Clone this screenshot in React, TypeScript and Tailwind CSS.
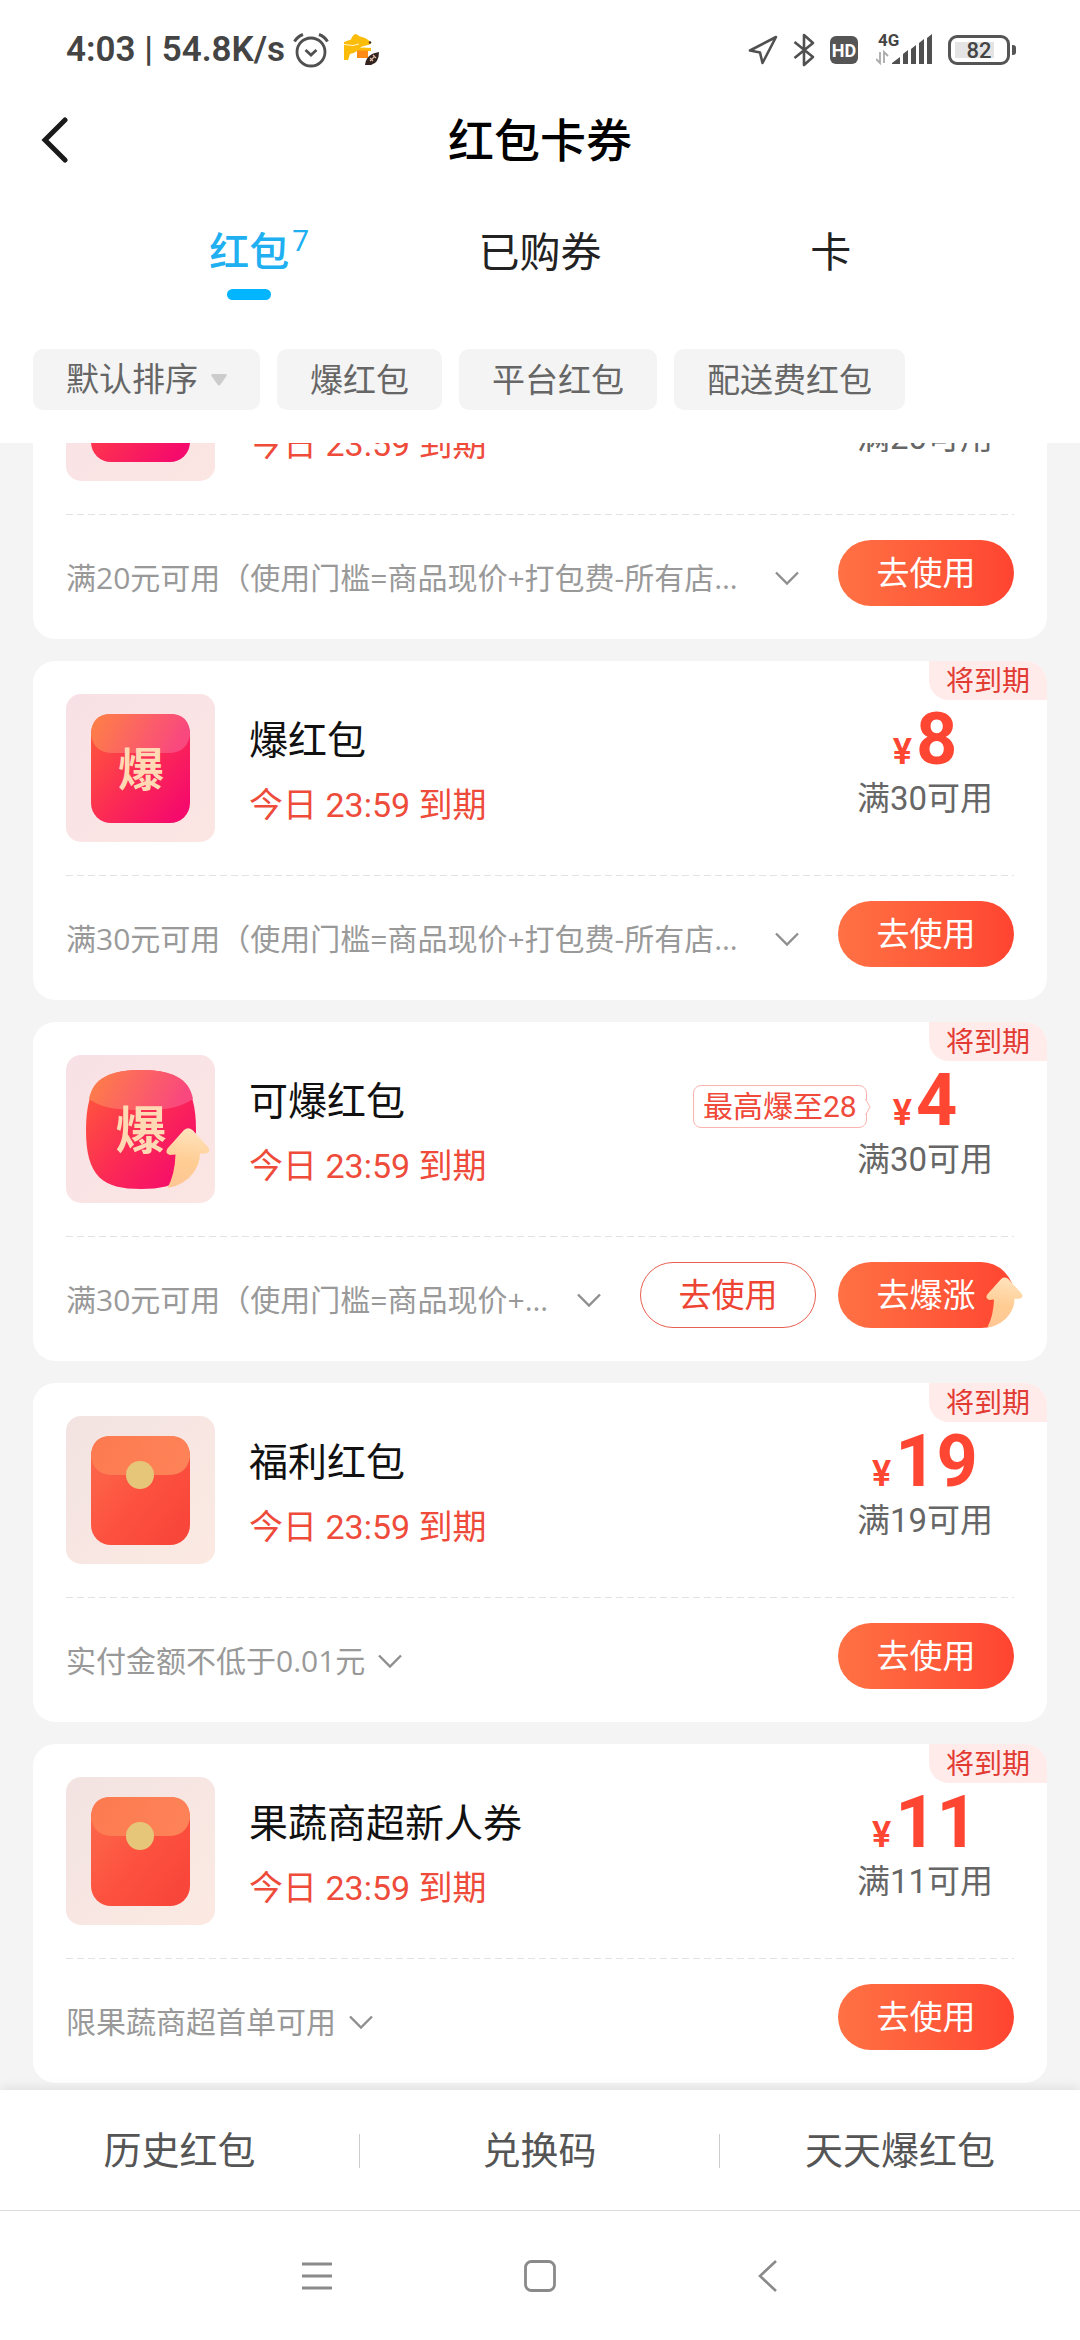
import { useId, useLayoutEffect, useRef } from "react";

type IconKind = "burst" | "boost" | "envelope";

type Coupon = {
  id: number;
  icon: IconKind;
  title?: string;
  expires: string;
  amount?: string;
  threshold: string;
  note: string;
  expiring?: boolean;
  boostTo?: string;
};

const coupons: Coupon[] = [
  {
    id: 1,
    icon: "burst",
    expires: "今日 23:59 到期",
    threshold: "满20可用",
    note: "满20元可用（使用门槛=商品现价+打包费-所有店铺优惠）",
  },
  {
    id: 2,
    icon: "burst",
    title: "爆红包",
    expires: "今日 23:59 到期",
    amount: "8",
    threshold: "满30可用",
    note: "满30元可用（使用门槛=商品现价+打包费-所有店铺优惠）",
    expiring: true,
  },
  {
    id: 3,
    icon: "boost",
    title: "可爆红包",
    expires: "今日 23:59 到期",
    amount: "4",
    threshold: "满30可用",
    note: "满30元可用（使用门槛=商品现价+打包费-所有店铺优惠）",
    expiring: true,
    boostTo: "最高爆至28",
  },
  {
    id: 4,
    icon: "envelope",
    title: "福利红包",
    expires: "今日 23:59 到期",
    amount: "19",
    threshold: "满19可用",
    note: "实付金额不低于0.01元",
    expiring: true,
  },
  {
    id: 5,
    icon: "envelope",
    title: "果蔬商超新人券",
    expires: "今日 23:59 到期",
    amount: "11",
    threshold: "满11可用",
    note: "限果蔬商超首单可用",
    expiring: true,
  },
];

const ARROW =
  "M18 2Q22-1.500 26.500 2L42.500 19.500Q45 24.500 39.500 25.500H34Q34 35 28 44Q19 57 1.500 60Q9 46 9.500 26.500L4 27Q-1.500 25.500 1.500 20.500Z";

function ArrowGradient({ id }: { id: string }) {
  return (
    <linearGradient id={id} x1="0.5" y1="0" x2="0.4" y2="1">
      <stop offset="0" stopColor="#ffe3bd" />
      <stop offset="0.55" stopColor="#ffcd94" />
      <stop offset="1" stopColor="#ffc694" />
    </linearGradient>
  );
}

function CouponIcon({ kind }: { kind: IconKind }) {
  const id = useId();
  const envelope = kind === "envelope";
  return (
    <svg viewBox="0 0 149 148" className="h-[148px] w-[149px] shrink-0" aria-hidden="true">
      <defs>
        <linearGradient id={`${id}bg`} x1="0" y1="0" x2="1" y2="1">
          <stop offset="0" stopColor={envelope ? "#f2e3e2" : "#f8e1e6"} />
          <stop offset="1" stopColor={envelope ? "#fce9e2" : "#fbe6e3"} />
        </linearGradient>
        <linearGradient id={`${id}body`} x1="0" y1="0.1" x2="0.9" y2="0.9">
          <stop offset="0" stopColor={envelope ? "#fb6a4c" : "#ff5a3a"} />
          <stop offset="0.55" stopColor={envelope ? "#fd513f" : "#fb2a55"} />
          <stop offset="1" stopColor={envelope ? "#f8463a" : "#f50b6b"} />
        </linearGradient>
        <linearGradient id={`${id}flap`} x1="0" y1="0" x2="1" y2="0.2">
          <stop offset="0" stopColor={envelope ? "#fd7a50" : "#fe8244"} />
          <stop offset="1" stopColor={envelope ? "#fe8257" : "#f9487e"} />
        </linearGradient>
        <ArrowGradient id={`${id}arrow`} />
      </defs>
      <rect width="149" height="148" rx="15" fill={`url(#${id}bg)`} />
      {kind === "boost" ? (
        <>
          <path
            d="M75 15C113 15 130 27 130 75C130 122 113 134 75 134C37 134 20 122 20 75C20 27 37 15 75 15Z"
            fill={`url(#${id}body)`}
          />
          <path
            d="M75 15C106 15 123 23 127 44C114 53 98 55 75 55C52 55 35 53 23 44C27 23 44 15 75 15Z"
            fill={`url(#${id}flap)`}
          />
        </>
      ) : (
        <>
          <rect x="25" y="20" width="99" height="109" rx="20" fill={`url(#${id}body)`} />
          <path
            d="M45 20H104Q124 20 124 41Q121 59 102 59H47Q28 59 25 41Q25 20 45 20Z"
            fill={`url(#${id}flap)`}
          />
        </>
      )}
      {envelope ? (
        <circle cx="74" cy="59" r="14" fill="#e6c678" />
      ) : (
        <text
          x={75}
          y={kind === "boost" ? 94 : 92}
          textAnchor="middle"
          fontFamily="'Noto Sans CJK SC', sans-serif"
          fontWeight="700"
          fontSize={kind === "boost" ? 51 : 46}
          fill="#ffd9b3"
        >
          爆
        </text>
      )}
      {kind === "boost" && (
        <g transform="translate(100 73)">
          <path d={ARROW} fill={`url(#${id}arrow)`} />
        </g>
      )}
    </svg>
  );
}

function BoostArrow() {
  const id = useId();
  return (
    <svg
      viewBox="0 0 44 60"
      className="absolute -right-[9px] bottom-0 h-[51px] w-[37px]"
      aria-hidden="true"
    >
      <defs>
        <ArrowGradient id={id} />
      </defs>
      <path d={ARROW} fill={`url(#${id})`} />
    </svg>
  );
}

function CouponCard({ coupon }: { coupon: Coupon }) {
  return (
    <article className="relative rounded-[22px] bg-white px-[33px] pt-[33px] pb-[33px]">
      {coupon.expiring && (
        <span className="absolute top-0 right-0 h-[39px] rounded-tr-[22px] rounded-bl-[20px] bg-[#ffebea] px-[17px] text-[28px] leading-[42px] text-[#e23b33]">
          将到期
        </span>
      )}
      <div className="flex">
        <CouponIcon kind={coupon.icon} />
        <div className="min-w-0 flex-1 pt-[21px] pl-[34px]">
          <h2 className="h-[52px] text-[39px] leading-[52px] text-[#111]">{coupon.title}</h2>
          <p className="mt-[16px] text-[34px] leading-[44px] text-[#ee4b3a]">{coupon.expires}</p>
        </div>
        <div className="flex w-[178px] flex-col items-center pt-[14px]">
          <div className="relative flex h-[64px] items-baseline gap-[4px] font-bold text-[#ff4632]">
            {coupon.amount && (
              <>
                <span className="text-[36px] leading-[64px] font-semibold">¥</span>
                <span className="text-[72px] leading-[64px]">{coupon.amount}</span>
              </>
            )}
            {coupon.boostTo && (
              <span className="absolute top-[16px] right-full mr-[26px] rounded-[8px] border border-[#fbb5ae] px-[9px] text-[30px] leading-[41px] font-normal whitespace-nowrap text-[#f04a3a]">
                {coupon.boostTo}
                <svg viewBox="0 0 6 16" className="absolute top-[13px] -right-[5px] h-4 w-[6px]" aria-hidden="true">
                  <path d="M0 0H.5L5 8L.5 16H0Z" fill="#fff" />
                  <path d="M.5 0L5 8L.5 16" fill="none" stroke="#fbb5ae" />
                </svg>
              </span>
            )}
          </div>
          <p className="mt-[5px] text-[33px] leading-[44px] text-[#666]">{coupon.threshold}</p>
        </div>
      </div>
      <div className="mt-[33px] h-px bg-[repeating-linear-gradient(90deg,#e2e2e2_0_7px,transparent_7px_11px)]" />
      <div className="mt-[25px] flex items-center gap-[22px]">
        <div className="flex min-w-0 flex-1 items-center pt-[10px] pr-[16px]">
          <p className="truncate font-['Open_Sans','Noto_Sans_CJK_SC',sans-serif] text-[30px] leading-[40px] text-[#999]">
            {coupon.note}
          </p>
          <button type="button" aria-label="展开使用规则" className="ml-[12px] shrink-0">
            <svg viewBox="0 0 26 16" className="h-4 w-[26px]" aria-hidden="true">
              <path d="M2 2.5L13 13.5L24 2.5" fill="none" stroke="#8f8f8f" strokeWidth="2.4" />
            </svg>
          </button>
        </div>
        {coupon.boostTo && (
          <button
            type="button"
            className="h-[66px] w-[176px] shrink-0 rounded-full border border-[#e8604f] text-[33px] leading-[66px] text-[#ee4433]"
          >
            去使用
          </button>
        )}
        <button
          type="button"
          className="relative h-[66px] w-[176px] shrink-0 rounded-full bg-linear-to-r from-[#ff7144] to-[#ff4431] text-[33px] leading-[68px] text-white"
        >
          {coupon.boostTo ? "去爆涨" : "去使用"}
          {coupon.boostTo && <BoostArrow />}
        </button>
      </div>
    </article>
  );
}

function StatusBar() {
  return (
    <div className="flex h-[100px] items-center pr-[64px] pl-[66px] text-[#444]">
      <span className="text-[35px] leading-[40px] font-semibold">4:03 | 54.8K/s</span>
      <svg viewBox="0 0 36 36" className="ml-[8px] h-9 w-9" fill="none" stroke="#505050" aria-hidden="true">
        <circle cx="18" cy="20" r="14" strokeWidth="2.8" />
        <path d="M12.5 18L18 23L23.5 18" strokeWidth="2.8" />
        <path d="M1.5 9.5Q4.5 4.5 10 2.5M34.5 9.5Q31.5 4.5 26 2.5" strokeWidth="3" />
      </svg>
      <svg viewBox="0 0 36 32" className="ml-[15px] h-8 w-9" aria-hidden="true">
        <path
          d="M0 8L7 5.500Q9 0 12 0L16 2.500Q22 3.500 26 7.500Q28 10 24 11L18 12.500L13 17Q11 19 6 20L4 26H0Z"
          fill="#fbbc0a"
        />
        <path d="M13 15L19 13.500L27 14V17H13Z" fill="#fbbc0a" />
        <path d="M0 10.500L9 11.500L15 10" fill="none" stroke="#fff4cf" strokeWidth="1" />
        <rect x="13" y="16.500" width="11" height="7.500" fill="#ff8b17" />
        <circle cx="26" cy="8.500" r="1.200" fill="#3a2a1a" />
        <path d="M21 31Q22 20 35 18Q35 29 27 31Z" fill="#33241f" />
        <path d="M26 27L31 22M26 24L29 27M29 21L32 24" stroke="#dcb9a4" strokeWidth="1.200" />
      </svg>
      <div className="ml-auto flex items-center">
        <svg viewBox="0 0 30 30" className="h-[30px] w-[30px]" aria-hidden="true">
          <path d="M28 2L14.500 28L12 17.500L2 15.500Z" fill="none" stroke="#505050" strokeWidth="2.600" strokeLinejoin="round" />
        </svg>
        <svg viewBox="0 0 22 34" className="ml-[15px] h-[34px] w-[22px]" aria-hidden="true">
          <path d="M1.500 9L20 24L11 32V2L20 10L1.500 25" fill="none" stroke="#505050" strokeWidth="2.600" strokeLinejoin="round" />
        </svg>
        <span className="ml-[15px] h-[28px] w-[28px] rounded-[6px] bg-[#555] text-center text-[18px] leading-[29px] font-bold text-white">
          HD
        </span>
        <div className="relative ml-[18px] h-[32px] w-[56px]">
          <span className="absolute -top-[3px] left-[2px] text-[17px] leading-[18px] font-bold">4G</span>
          <svg viewBox="0 0 56 32" className="h-8 w-14" aria-hidden="true">
            <path d="M16 30V29L24 23V30ZM27 30V20L32 16V30ZM35 30V15L40 11V30ZM43 30V9L48 5V30ZM51 30V4L56 0V30Z" fill="#505050" />
            <path d="M0 25L4 29V18M12 22L8 18V29" fill="none" stroke="#aaa" strokeWidth="1.800" />
          </svg>
        </div>
        <div className="ml-[16px] flex h-[30px] w-[62px] items-center rounded-[9px] border-[3px] border-[#555] p-[4px]">
          <span className="h-full w-full bg-[linear-gradient(90deg,#e4e4e4_82%,transparent_82%)] text-center text-[22px] leading-[17px] font-medium">
            82
          </span>
        </div>
        <span className="ml-[2px] h-[10px] w-[4px] rounded-r-[3px] bg-[#555]" />
      </div>
    </div>
  );
}

export default function App() {
  const listRef = useRef<HTMLElement>(null);

  useLayoutEffect(() => {
    const list = listRef.current;
    if (list) list.scrollTop = list.scrollHeight;
  }, []);

  return (
    <div className="flex h-screen flex-col bg-[#f4f4f4] font-['Roboto','Noto_Sans_CJK_SC',sans-serif]">
      <header className="shrink-0 bg-white pb-[33px]">
        <StatusBar />
        <div className="grid h-[82px] grid-cols-[1fr_auto_1fr] items-center px-[40px]">
          <button type="button" aria-label="返回" className="justify-self-start">
            <svg viewBox="0 0 30 48" className="h-12 w-[30px]" aria-hidden="true">
              <path d="M25 3L5 23L25 43" fill="none" stroke="#1a1a1a" strokeWidth="5" strokeLinecap="round" />
            </svg>
          </button>
          <h1 className="text-[46px] leading-[60px] font-medium text-black">红包卡券</h1>
        </div>
        <div role="tablist" className="grid grid-cols-3 px-[104px] pt-[43px]">
          <button type="button" role="tab" aria-selected="true" className="flex flex-col items-center text-[#20b0f2]">
            <span className="flex items-start text-[40px] leading-[56px] font-medium">
              <span className="w-[18px]" />
              红包
              <sup className="top-0 w-[18px] pl-[3px] text-[30px] leading-[32px] font-normal">7</sup>
            </span>
            <span className="mt-[8px] h-[11px] w-[44px] rounded-full bg-[#03b4fe]" />
          </button>
          <button type="button" role="tab" aria-selected="false" className="self-start text-[41px] leading-[56px] text-[#222]">
            已购券
          </button>
          <button type="button" role="tab" aria-selected="false" className="self-start text-[41px] leading-[56px] text-[#222]">
            卡
          </button>
        </div>
        <div className="mt-[49px] flex h-[61px] gap-[17px] px-[33px] text-[33px] leading-[63px] text-[#666]">
          <button type="button" className="flex items-center gap-[13px] rounded-[10px] bg-[#f4f4f4] px-[33px]">
            默认排序
            <svg viewBox="0 0 16 12" className="h-3 w-4" aria-hidden="true">
              <path d="M1.500 0H14.500Q16.500 .5 15.500 2L9.500 10.500Q8 12.500 6.500 10.500L.5 2Q-.5 .5 1.500 0Z" fill="#ccc" />
            </svg>
          </button>
          <button type="button" className="rounded-[10px] bg-[#f4f4f4] px-[33px]">爆红包</button>
          <button type="button" className="rounded-[10px] bg-[#f4f4f4] px-[33px]">平台红包</button>
          <button type="button" className="rounded-[10px] bg-[#f4f4f4] px-[33px]">配送费红包</button>
        </div>
      </header>

      <main ref={listRef} className="min-h-0 flex-1 overflow-y-auto [scrollbar-width:none]">
        <div className="flex flex-col gap-[22px] px-[33px] pb-[7px]">
          {coupons.map((coupon) => (
            <CouponCard key={coupon.id} coupon={coupon} />
          ))}
        </div>
      </main>

      <footer className="relative shrink-0 bg-white shadow-[0_-3px_10px_rgba(0,0,0,0.08)]">
        <nav className="grid h-[120px] grid-cols-3 items-center divide-x divide-[#ccc] pt-[2px] text-center text-[38px] leading-[34px] text-[#555]">
          <a href="#history">历史红包</a>
          <a href="#redeem">兑换码</a>
          <a href="#daily">天天爆红包</a>
        </nav>
        <div className="flex h-[130px] items-center justify-center gap-[191px] border-t border-[#ddd]">
          <button type="button" aria-label="最近任务">
            <svg viewBox="0 0 32 32" className="h-8 w-8" aria-hidden="true">
              <path d="M1 4H31M1 16H31M1 28H31" stroke="#8a8a8a" strokeWidth="2.800" />
            </svg>
          </button>
          <button type="button" aria-label="主屏幕">
            <svg viewBox="0 0 32 32" className="h-8 w-8" aria-hidden="true">
              <rect x="1.500" y="1.500" width="29" height="29" rx="6" fill="none" stroke="#8a8a8a" strokeWidth="2.800" />
            </svg>
          </button>
          <button type="button" aria-label="后退">
            <svg viewBox="0 0 32 32" className="h-8 w-8" aria-hidden="true">
              <path d="M29 1L13 16L29 31" fill="none" stroke="#8a8a8a" strokeWidth="2.600" />
            </svg>
          </button>
        </div>
      </footer>
    </div>
  );
}
